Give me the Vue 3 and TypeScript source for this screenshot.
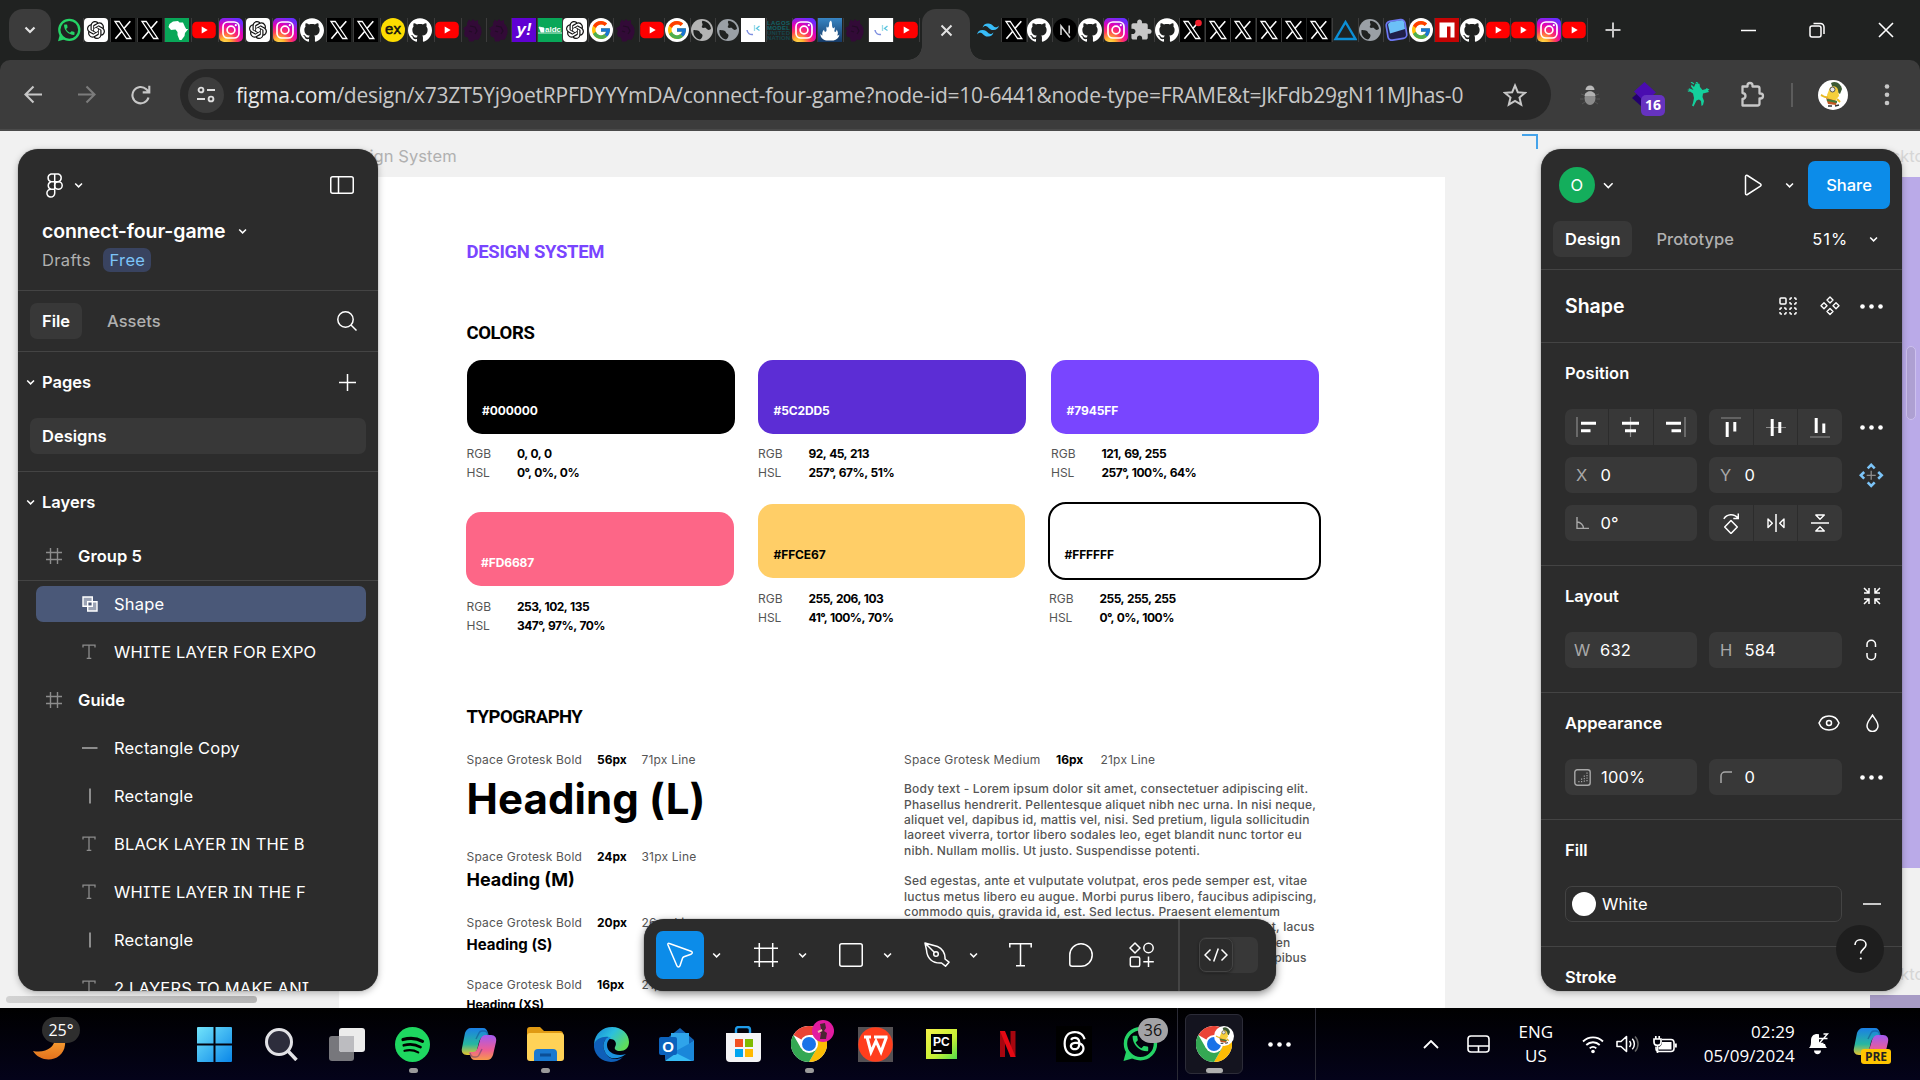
<script setup lang="ts">
import { h } from 'vue'
import type { FunctionalComponent } from 'vue'

const X_MARK =
  '<path d="M0 0h24v24H0z" fill="#000"/><path d="M4 3.5h4.2l11.6 17h-4.2z" fill="#000" stroke="#fff" stroke-width="1.3"/><path d="M19.3 3.2L12.9 10.6M10.8 13.2L4.4 20.8" stroke="#fff" stroke-width="1.6"/>'
const GLOBE = (c: string) =>
  `<circle cx="12" cy="12" r="11" fill="${c}"/><path d="M3.500 12c3 .2 6 .4 6.500 2.500.4 1.500 2.500 1 2.500 3 0 1.500-1 3-2.500 4C5 20.500 2.800 16 3.500 12zM12.500 2.800c4 .2 8 3.500 8.500 7.700-1.500 2.500-4 1.200-5-.5-1.500-.5-3 .5-4-.5s1-2 .5-3.500-1-2 0-3.200z" fill="#202221"/>`

/* Drawings are kept as SVG markup, each in its own pixel-sized view box. */
const art: Record<string, string> = {
  whatsapp:
    '<circle cx="12.300" cy="11.800" r="10" fill="none" stroke="#25d366" stroke-width="2.300"/><path d="M1 23.300l2-7.300 5 5.300z" fill="#25d366"/><path transform="translate(5.300 4.700) scale(.58)" d="M6.620 10.790c1.440 2.830 3.760 5.140 6.590 6.590l2.200-2.200c.27-.27.67-.36 1.020-.24 1.120.37 2.330.57 3.570.57.55 0 1 .45 1 1V20c0 .55-.45 1-1 1-9.390 0-17-7.610-17-17 0-.55.45-1 1-1h3.500c.55 0 1 .45 1 1 0 1.250.2 2.450.57 3.570.11.35.03.74-.25 1.020z" fill="#25d366"/>',
  gpt:
    '<rect width="24" height="24" rx="4" fill="#fff"/><path transform="translate(3 3) scale(.75)" fill="#111" d="M22.2819 9.8211a5.9847 5.9847 0 0 0-.5157-4.9108 6.0462 6.0462 0 0 0-6.5098-2.9A6.0651 6.0651 0 0 0 4.9807 4.1818a5.9847 5.9847 0 0 0-3.9977 2.9 6.0462 6.0462 0 0 0 .7427 7.0966 5.98 5.98 0 0 0 .511 4.9107 6.051 6.051 0 0 0 6.5146 2.9001A5.9847 5.9847 0 0 0 13.2599 24a6.0557 6.0557 0 0 0 5.7718-4.2058 5.9894 5.9894 0 0 0 3.9977-2.9001 6.0557 6.0557 0 0 0-.7475-7.0729zm-9.022 12.6081a4.4755 4.4755 0 0 1-2.8764-1.0408l.1419-.0804 4.7783-2.7582a.7948.7948 0 0 0 .3927-.6813v-6.7369l2.02 1.1686a.071.071 0 0 1 .038.052v5.5826a4.504 4.504 0 0 1-4.4945 4.4944zm-9.6607-4.1254a4.4708 4.4708 0 0 1-.5346-3.0137l.142.0852 4.783 2.7582a.7712.7712 0 0 0 .7806 0l5.8428-3.3685v2.3324a.0804.0804 0 0 1-.0332.0615L9.74 19.9502a4.4992 4.4992 0 0 1-6.1408-1.6464zM2.3408 7.8956a4.485 4.485 0 0 1 2.3655-1.9728V11.6a.7664.7664 0 0 0 .3879.6765l5.8144 3.3543-2.0201 1.1685a.0757.0757 0 0 1-.071 0l-4.8303-2.7865A4.504 4.504 0 0 1 2.3408 7.872zm16.5963 3.8558L13.1038 8.364 15.1192 7.2a.0757.0757 0 0 1 .071 0l4.8303 2.7913a4.4944 4.4944 0 0 1-.6765 8.1042v-5.6772a.79.79 0 0 0-.407-.667zm2.0107-3.0231l-.142-.0852-4.7735-2.7818a.7759.7759 0 0 0-.7854 0L9.409 9.2297V6.8974a.0662.0662 0 0 1 .0284-.0615l4.8303-2.7866a4.4992 4.4992 0 0 1 6.6802 4.66zM8.3065 12.863l-2.02-1.1638a.0804.0804 0 0 1-.038-.0567V6.0742a4.4992 4.4992 0 0 1 7.3757-3.4537l-.142.0805L8.704 5.459a.7948.7948 0 0 0-.3927.6813zm1.0976-2.3654l2.602-1.4998 2.6069 1.4998v2.9994l-2.5974 1.4997-2.6067-1.4997Z"/>',
  x: X_MARK,
  xdot: X_MARK + '<circle cx="18.500" cy="5" r="3.300" fill="#f4212e"/>',
  africa:
    '<path d="M0 0h24v24H0z" fill="#08a758"/><path d="M4.500 6L8 3.500l5-.5 1.500 1.500L18 4.500l2 4.500 1.200 2h2L20 15l-.5 3-3 4h-2l-2-5v-3l-2-2.500-4.500.5L3.500 9z" fill="#fff"/>',
  youtube:
    '<rect x=".2" y="3.800" width="23.600" height="16.500" rx="4.500" fill="#f00"/><path d="M9.700 8.500v7l6-3.500z" fill="#fff"/>',
  instagram:
    '<defs><radialGradient id="ig" cx=".25" cy="1.050" r="1.100"><stop offset="0" stop-color="#fd5"/><stop offset=".2" stop-color="#ffb52e"/><stop offset=".45" stop-color="#ff3d5a"/><stop offset=".7" stop-color="#e400b5"/><stop offset="1" stop-color="#6a2cff"/></radialGradient></defs><rect width="24" height="24" rx="5" fill="url(#ig)"/><rect x="4" y="4" width="16" height="16" rx="4.800" fill="none" stroke="#fff" stroke-width="1.700"/><circle cx="12" cy="12" r="3.900" fill="none" stroke="#fff" stroke-width="1.700"/><circle cx="16.800" cy="7.200" r="1.100" fill="#fff"/>',
  github:
    '<path fill="#fff" d="M12 .297c-6.630 0-12 5.373-12 12 0 5.303 3.438 9.800 8.205 11.385.6.113.82-.258.82-.577 0-.285-.01-1.040-.015-2.040-3.338.724-4.042-1.610-4.042-1.610C4.422 18.070 3.633 17.700 3.633 17.700c-1.087-.744.084-.729.084-.729 1.205.084 1.838 1.236 1.838 1.236 1.070 1.835 2.809 1.305 3.495.998.108-.776.417-1.305.76-1.605-2.665-.3-5.466-1.332-5.466-5.930 0-1.310.465-2.380 1.235-3.220-.135-.303-.54-1.523.105-3.176 0 0 1.005-.322 3.300 1.230.96-.267 1.980-.399 3-.405 1.020.006 2.040.138 3 .405 2.280-1.552 3.285-1.230 3.285-1.230.645 1.653.24 2.873.12 3.176.765.84 1.230 1.910 1.230 3.220 0 4.610-2.805 5.625-5.475 5.920.42.36.81 1.096.81 2.220 0 1.606-.015 2.896-.015 3.286 0 .315.21.69.825.57C20.565 22.092 24 17.592 24 12.297c0-6.627-5.373-12-12-12"/>',
  ex:
    '<circle cx="12" cy="12" r="12" fill="#fddc00"/><text x="12" y="16.200" text-anchor="middle" font-family="Liberation Sans, sans-serif" font-size="15" fill="#111" stroke="#111" stroke-width=".5">ex</text>',
  lion:
    '<path d="M8 1.500l2 2 2-2.500 2 2.300 3-1.300v3.500c2.500 2 4 5 3.500 9-.3 2.500-1.500 3.500-1.500 5l-2 2.500-3-.5-2 2H8l-1-4-3-1-1-3 1-3-2-2 4-3V5z" fill="#320a37"/><path d="M9 8l5 1 2 4-2 3M8 13l3 1" fill="none" stroke="#220c26" stroke-width="1.200"/>',
  yahoo:
    '<path d="M0 0h24v24H0z" fill="#6001d2"/><text x="12" y="16.500" text-anchor="middle" font-family="Liberation Sans, sans-serif" font-weight="700" font-style="italic" font-size="17" fill="#fff">y!</text>',
  alde:
    '<path d="M0 0h24v24H0z" fill="#08a758"/><path d="M0 15h24M1 9l5 1v4H3z" stroke="#fff" fill="#fff" stroke-width=".8"/><text x="15" y="14" text-anchor="middle" font-family="Liberation Sans, sans-serif" font-weight="700" font-size="8" fill="#fff">aldc</text>',
  google:
    '<circle cx="12" cy="12" r="12" fill="#fff"/><g transform="translate(1.200 1.200) scale(.45)"><path fill="#FFC107" d="M43.611 20.083H42V20H24v8h11.303c-1.649 4.657-6.080 8-11.303 8-6.627 0-12-5.373-12-12s5.373-12 12-12c3.059 0 5.842 1.154 7.961 3.039l5.657-5.657C34.046 6.053 29.268 4 24 4 12.955 4 4 12.955 4 24s8.955 20 20 20 20-8.955 20-20c0-1.341-.138-2.650-.389-3.917z"/><path fill="#FF3D00" d="M6.306 14.691l6.571 4.819C14.655 15.108 18.961 12 24 12c3.059 0 5.842 1.154 7.961 3.039l5.657-5.657C34.046 6.053 29.268 4 24 4 16.318 4 9.656 8.337 6.306 14.691z"/><path fill="#4CAF50" d="M24 44c5.166 0 9.860-1.977 13.409-5.192l-6.190-5.238A11.910 11.910 0 0 1 24 36c-5.202 0-9.619-3.317-11.283-7.946l-6.522 5.025C9.505 39.556 16.227 44 24 44z"/><path fill="#1976D2" d="M43.611 20.083H42V20H24v8h11.303a12.040 12.040 0 0 1-4.087 5.571l6.190 5.238C36.971 39.205 44 34 44 24c0-1.341-.138-2.650-.389-3.917z"/></g>',
  globe: GLOBE('#b4b4b4'),
  globe2: GLOBE('#9aa0a6'),
  smile:
    '<path d="M0 0h24v24H0z" fill="#fff"/><path d="M6 12c.5 3.500 3 5 6 4.500" fill="none" stroke="#7d8fe0" stroke-width="1.500"/><path d="M13.500 7v6" stroke="#9adbe8" stroke-width="1.300"/><path d="M18.500 8l-3 2.500 3 2" fill="none" stroke="#5cc6df" stroke-width="1.300"/>',
  lagos:
    '<g font-family="Liberation Sans, sans-serif" font-weight="700" font-size="6" fill="#126367"><text x="0" y="6.500" textLength="23">LAGOS</text><text x="0" y="11.500" textLength="23">MODEL</text><text x="0" y="16.700" textLength="23" fill="#17454b">UNITED</text><text x="0" y="21.800" textLength="23" fill="#17454b">NATION</text></g>',
  fire:
    '<defs><linearGradient id="fr" x2="0" y2="1"><stop stop-color="#3785c4"/><stop offset="1" stop-color="#153a66"/></linearGradient></defs><path d="M0 0h24v24H0z" fill="url(#fr)"/><path d="M13 2.500c-3 2-1 4.500-2.500 6.500-.8 1-1.500.5-1.500-.5-1.500 1.500.5 3.500-1 5-1.500.7-2-.5-1.800-2C4 13.500 4 16 4.500 17.500 3.500 17.300 3 16.500 2.500 15.500c-.5 4 2.500 6.500 6 7h7c3-.5 5.500-3 6-6-.7.8-1.500 1.200-2.200 1 1.200-2.500.5-4.500-.8-6 0 1.500-.5 2.500-1.500 2.500-1.500-1 .5-3-.5-5-.3 1-1 1.500-1.700 1-1.500-2.500 0-5-1.800-7.500z" fill="#fff"/>',
  tailwind:
    '<path transform="translate(-1.200 -1.200) scale(1.100)" fill="#38bdf8" d="M12 6c-2.670 0-4.330 1.330-5 4 1-1.330 2.170-1.830 3.500-1.500.76.19 1.310.74 1.910 1.350.98 1 2.090 2.150 4.590 2.150 2.670 0 4.330-1.330 5-4-1 1.330-2.170 1.830-3.500 1.500-.76-.19-1.300-.74-1.910-1.350C15.610 7.150 14.500 6 12 6m-5 6c-2.670 0-4.330 1.330-5 4 1-1.330 2.170-1.830 3.500-1.500.76.19 1.300.74 1.910 1.350C8.390 16.850 9.500 18 12 18c2.670 0 4.330-1.330 5-4-1 1.330-2.170 1.830-3.500 1.500-.76-.19-1.300-.74-1.910-1.350C10.610 13.150 9.500 12 7 12z"/>',
  next:
    '<circle cx="12" cy="12" r="12" fill="#000"/><path d="M8 17V8l9 11.500M16.200 7.500v8" fill="none" stroke="#ddd" stroke-width="1.500"/>',
  puzzle:
    '<path transform="translate(.5 .5) scale(.96)" fill="#c7c7c7" d="M20.500 11H19V7c0-1.100-.9-2-2-2h-4V3.500C13 2.120 11.880 1 10.500 1S8 2.120 8 3.500V5H4c-1.100 0-1.990.9-1.990 2v3.800H3.500c1.490 0 2.700 1.210 2.700 2.700s-1.210 2.700-2.700 2.700H2V20c0 1.100.9 2 2 2h3.800v-1.500c0-1.490 1.210-2.700 2.700-2.700 1.490 0 2.700 1.210 2.700 2.700V22H17c1.100 0 2-.9 2-2v-4h1.500c1.380 0 2.500-1.120 2.500-2.500S21.880 11 20.500 11z"/>',
  triangle: '<path d="M12.500 4L22.500 21H2.500z" fill="none" stroke="#0c8fd6" stroke-width="2.400"/>',
  tablet:
    '<rect x="3" y="2.500" width="19" height="19" rx="4" transform="rotate(-9 12 12)" fill="#20204a" stroke="#6d78f2" stroke-width="1.700"/><path d="M4 6.500q.5-2 2.500-2.500l11-1.700q2 0 2.500 1.700l1 7-15 4.500z" fill="#6cc0f8"/>',
  npm: '<path d="M0 0h24v24H0z" fill="#c60404"/><path d="M4.500 4.500h15v15h-4V8.500h-3.500v11H4.500z" fill="#fff"/>',

  /* browser chrome */
  tabSearch: '<path d="M5.500 7.500l4.500 4.500 4.500-4.500" stroke="#e3e3e3" stroke-width="2.200"/>',
  close: '<path d="M1.500 1.500l10 10m0-10l-10 10" stroke="#e3e3e3" stroke-width="2"/>',
  newTab: '<path d="M8 .5v15M.5 8h15" stroke="#c7c7c7" stroke-width="2"/>',
  winMin: '<path d="M0 8.500h15" stroke="#fff" stroke-width="1.500"/>',
  winMax:
    '<rect x="1" y="4" width="11" height="11" rx="2" stroke="#fff" stroke-width="1.500"/><path d="M4.500 1.500h7a3.500 3.500 0 0 1 3.500 3.500v7" stroke="#fff" stroke-width="1.500"/>',
  winClose: '<path d="M1 1l14 14M15 1L1 15" stroke="#fff" stroke-width="1.600"/>',
  back: '<path d="M18 9.500H2M9.500 1.500l-8 8 8 8" stroke="#c7c7c7" stroke-width="2.100"/>',
  forward: '<path d="M0 9.500h16M8.500 1.500l8 8-8 8" stroke="#7c7c7c" stroke-width="2.100"/>',
  reload:
    '<path d="M17.500 12.500A8.200 8.200 0 1 1 15.300 4.200L18 7M18.300 .8V7.400H11.700" stroke="#c7c7c7" stroke-width="2.100"/>',
  tune: '<circle cx="4" cy="4" r="2.400" stroke="#dedede" stroke-width="1.900"/><circle cx="14" cy="13" r="2.400" stroke="#dedede" stroke-width="1.900"/><path d="M10 4h8M0 13h8" stroke="#dedede" stroke-width="2"/>',
  star: '<path d="M12 2.500l2.800 6.700 7.200.6-5.500 4.700 1.700 7.100-6.200-3.800-6.200 3.800 1.700-7.100L2 9.800l7.200-.6z" stroke="#c7c7c7" stroke-width="2"/>',
  bug: '<path d="M5.500 6a3.800 3.800 0 0 1 9 0z" fill="#b9b9b9"/><ellipse cx="10" cy="14" rx="5.500" ry="7" fill="#8b8b8b"/><path d="M4.500 12c0-6 11-6 11 0z" fill="#b0b0b0"/><path d="M1 10l3 1M0 15h3.500M2 20l3-2M19 10l-3 1M20 15h-3.500M18 20l-3-2" stroke="#555" stroke-width="1"/>',
  diamond: '<path d="M0 16l9-8 9 9-8 8z" fill="#23006e"/><path d="M2 9.500L12.500 0 24 10.500 12.500 20z" fill="#4a0cb0"/>',
  goblin:
    '<path d="M5.500 2.500L8 5l1.500-3.500 4 .3.500 3.200 2.500 3 3.500-1 .5-1 3 1.500-1.500 1 1 1.500-6 1.500-.5 3.500 1.500 4-1 4-1.500 1-.5-5-2-1.500-2.500 1-3 6-1.500-1L7 21l1-5-1-4.500L4 9.500 1.500 10 3 8.500 1 8l2.500-.8L2.500 6l5 2L5 4.500z" fill="#14d09c"/><path d="M5 0l3 2M10 0l2 1.500" stroke="#14d09c" stroke-width="1.200"/>',
  extension:
    '<path d="M8.500 5.500V4.500a2.500 2.500 0 0 1 5 0v1h5a2 2 0 0 1 2 2v5h1a2.500 2.500 0 0 1 0 5h-1v5a2 2 0 0 1-2 2H3.500v-6.500c4-.5 4-5.500 0-6V5.500z" stroke="#c7c7c7" stroke-width="2.300" stroke-linejoin="round"/>',
  avatar:
    '<circle cx="15" cy="15" r="15" fill="#fff"/><path d="M13 3c5-3 10 1 11 6l-2 5-7-5z" fill="#3d5a34"/><path d="M11 10c1-5 8-5 9 0l1 6-5 6-6-2-1-5z" fill="#f6cf3b"/><circle cx="14.500" cy="9.500" r="2.500" fill="#e8e8e8" stroke="#555"/><path d="M8 18l11 3-1 4-8-1z" fill="#c2571f"/><path d="M10 17c-3 1-5-1-7-2M19 19l3 3" stroke="#e8b923" stroke-width="2"/><path d="M10 26h4M17 26l4-1" stroke="#333" stroke-width="1.500"/><path d="M9 20l10 2" stroke="#3f7d3a" stroke-width="2"/>',
  kebab: '<g fill="#c7c7c7"><circle cx="3" cy="2.500" r="2.300"/><circle cx="3" cy="10.700" r="2.300"/><circle cx="3" cy="19" r="2.300"/></g>',

  /* editor */
  chev: '<path d="M1.200 1.500l3.400 3.400L8 1.500" stroke-width="1.500"/>',
  chevL: '<path d="M1 1.300l4.300 4.300 4.300-4.300" stroke-width="1.500"/>',
  figma:
    '<g stroke-width="1.500"><path d="M8.700 1H5a4 4 0 0 0 0 7.700h3.700zM8.700 1h3.600a4 4 0 0 1 0 7.700H8.700zM8.700 8.700H5a4 4 0 0 0 0 7.600h3.700zM8.700 16.300H5a3.900 3.900 0 1 0 3.700 3.900z"/><circle cx="12.400" cy="12.500" r="3.800"/></g>',
  sidebar: '<rect x=".75" y=".75" width="22.500" height="16.500" rx="2" stroke-width="1.500"/><path d="M8.500 1v16" stroke-width="1.500"/>',
  search: '<circle cx="8.500" cy="8.500" r="7.700" stroke-width="1.500"/><path d="M14 14l5.500 5.500" stroke-width="1.500"/>',
  plus: '<path d="M8.500 0v17M0 8.500h17" stroke-width="1.500"/>',
  hash: '<path d="M4.500 0v16M11.500 0v16M0 4.500h16M0 11.500h16" stroke-width="1.400"/>',
  union:
    '<path d="M1 1h9.300v4.700h4.700V15H5.700v-4.700H1z" fill="#fff" fill-opacity=".45" stroke-width="1.400"/><path d="M5.700 10.300V5.700h4.600v4.600z" fill="#4a5878" stroke-width="1.400"/>',
  tee: '<path d="M1 3.500V1.200h12V3.500M7 1.200v13M4.700 14.300h4.600" stroke-width="1.300"/>',
  bar: '<path d="M0 8h15.500" stroke-width="2"/>',
  pole: '<path d="M8 .5v15" stroke-width="2"/>',
  play: '<path d="M1.500 2.500v17c0 1.200 1 1.500 1.900 1l13-8.300c.9-.6.9-1.700 0-2.300l-13-8.400c-.9-.5-1.900-.2-1.900 1z" stroke-width="1.500"/>',
  dots: '<g fill="currentColor" stroke="none"><circle cx="2.500" cy="2.500" r="2.300"/><circle cx="11.500" cy="2.500" r="2.300"/><circle cx="20.500" cy="2.500" r="2.300"/></g>',
  select:
    '<rect x="1" y="1" width="6" height="6" rx="1" stroke-width="1.500"/><g stroke-width="1.500"><path d="M11 3V2q0-1 1-1h1M15 1h1q1 0 1 1v1M17 5v1q0 1-1 1h-1M13 7h-1q-1 0-1-1V5"/><path d="M1 13v-1q0-1 1-1h1M5 11h1q1 0 1 1v1M7 15v1q0 1-1 1H5M3 17H2q-1 0-1-1v-1"/><path d="M11 13v-1q0-1 1-1h1M15 11h1q1 0 1 1v1M17 15v1q0 1-1 1h-1M13 17h-1q-1 0-1-1v-1"/></g>',
  component:
    '<g stroke-width="1.400" stroke-linejoin="round"><path d="M10 1l3 3-3 3-3-3zM10 12.500l3 3-3 3-3-3zM4 6.700l3 3-3 3-3-3zM16 6.700l3 3-3 3-3-3z"/></g>',
  alL: '<path d="M1 0v20" stroke="#8c8c8c"/><path d="M5 6.200h15M5 13.800h9.500" stroke-width="3"/>',
  alCx: '<path d="M9.500 0v20" stroke="#8c8c8c"/><path d="M1 6.200h17M4 13.800h11" stroke-width="3"/>',
  alR: '<path d="M20 0v20" stroke="#8c8c8c"/><path d="M1 6.200h15M6.500 13.800H16" stroke-width="3"/>',
  alT: '<path d="M0 1h20" stroke="#8c8c8c"/><path d="M6.200 5v15M13.800 5v9.500" stroke-width="3"/>',
  alCy: '<path d="M0 9.500h20" stroke="#8c8c8c"/><path d="M6.200 1v17M13.800 4v11" stroke-width="3"/>',
  alB: '<path d="M0 20h20" stroke="#8c8c8c"/><path d="M6.200 1v15M13.800 6.500V16" stroke-width="3"/>',
  move: '<g stroke="#7cc4f8" stroke-width="2.600"><path d="M8.700 5.300l3.500-3.500 3.500 3.500M8.700 19.300l3.500 3.500 3.500-3.500M5.200 9L1.800 12.300l3.400 3.400M19.200 9l3.500 3.300-3.500 3.400"/></g><path d="M12.200 7.800v9M7.700 12.300h9" stroke="#8c8c8c" stroke-width="1.300"/>',
  angle: '<path d="M1 0v11.500h12M1 5a6.500 6.500 0 0 1 6.500 6.500" stroke-width="1.400"/>',
  rotate: '<path d="M8 7.500l6.300 6.500L8 20.500 1.700 14z" stroke-width="1.500" stroke-linejoin="round"/><path d="M.8 5.800C4 1 11 .2 15 5.300M15.300 .5v5h-5" stroke-width="1.500"/>',
  flipH: '<path d="M9 0v18" stroke-width="1.500"/><path d="M1 5v8.500L5.300 9.200zM17 5v8.500l-4.300-4.300z" stroke-width="1.400" stroke-linejoin="round"/>',
  flipV: '<path d="M0 9h18" stroke-width="1.500"/><path d="M4.800 1h8.500L9 5.300zM4.800 17h8.500L9 12.700z" stroke-width="1.400" stroke-linejoin="round"/>',
  shrink:
    '<path d="M1 1l4.500 4.500M6 1v5H1M17 1l-4.500 4.500M12 1v5h5M1 17l4.500-4.500M6 17v-5H1M17 17l-4.500-4.500M12 17v-5h5" stroke-width="1.500"/>',
  link: '<path d="M1 8V5.500a4.200 4.200 0 0 1 8.500 0V8M1 14v2.500a4.200 4.200 0 0 0 8.500 0V14" stroke-width="1.500"/>',
  eye: '<path d="M1 8c1.500-4 5-7 10-7s8.500 3 10 7c-1.500 4-5 7-10 7S2.500 12 1 8z" stroke-width="1.500"/><circle cx="11" cy="8" r="2.500" stroke-width="1.500"/>',
  drop: '<path d="M6.500 1.200C8 4 12 7.500 12 12a5.500 5.500 0 0 1-11 0C1 7.500 5 4 6.500 1.200z" stroke-width="1.500"/>',
  opacity:
    '<rect x=".8" y=".8" width="15.400" height="15.400" rx="2.500" stroke="#a8a8a8" stroke-width="1.400"/><path d="M13 3.500v10M10.300 6.500v7M7.600 9.500v4M4.900 12v1.500" stroke="#a8a8a8" stroke-width="1.200" stroke-dasharray="1.200 1.300"/>',
  corner: '<path d="M1 12V5a4 4 0 0 1 4-4h7" stroke="#a8a8a8" stroke-width="1.500"/>',
  minus: '<path d="M0 1h18" stroke-width="1.500"/>',
  pointer:
    '<path d="M2.400 1.500L24 9.300c1.700.6 1.700 2.300 0 2.900l-7 2.500c-.7.300-1.200.7-1.500 1.500l-2.500 7.500c-.6 1.700-2.400 1.700-3.100 0L1 3C.6 1.800 1.300 1 2.400 1.500z" stroke-width="1.500"/>',
  frame: '<path d="M5.300 0v24M18.700 0v24M0 5.300h24M0 18.700h24" stroke-width="1.500"/>',
  square: '<rect x=".75" y=".75" width="22.500" height="22.500" rx="2" stroke-width="1.500"/>',
  pen: '<path d="M1 1l12.500 3.500c4.500 1.500 8 7 7.500 12.500l4 3.200-3.500 4-4-3.200C8 21.500 3 16 2.500 8zM1 1l9.500 9.500" stroke-width="1.500" stroke-linejoin="round"/><circle cx="12" cy="12" r="2.300" stroke-width="1.500"/>',
  text: '<path d="M.8 4.500V.8h21.400v3.700M11.500 .8v22M7 22.800h9" stroke-width="1.500"/>',
  comment: '<path d="M12 .8a11.200 11.200 0 1 1 0 22.400H3.300C1.500 23.200.8 22.500.8 20.700V12A11.200 11.200 0 0 1 12 .8z" stroke-width="1.500"/>',
  widgets:
    '<g stroke-width="1.500" stroke-linejoin="round"><path d="M6 1l5 5-5 5-5-5z"/><circle cx="19.500" cy="6" r="4.700"/><rect x="1.300" y="15" width="9.400" height="9.400" rx="1.500"/><path d="M19.500 14.500v10.500M14.300 19.700h10.500"/></g>',
  code: '<path d="M6.500 1.500L1 7l5.500 5.500M17.500 1.500L23 7l-5.500 5.500M14.300 .5L9.700 13.500" stroke-width="1.500"/>',
  help: '<path d="M1 6c0-3 2.200-5.200 5.400-5.200S12 3 12 5.700c0 4-5.300 4.300-5.300 8.800" stroke-width="1.600"/><circle cx="6.800" cy="19.500" r="1.100" fill="currentColor" stroke="none"/>',

  /* taskbar */
  weather:
    '<defs><linearGradient id="mn" x2="0" y2="1"><stop stop-color="#ffb13b"/><stop offset="1" stop-color="#e2711c"/></linearGradient></defs><path d="M22 1c6 12-4 22-20 19 8 13 30 11 32-6C35 7 30 2 22 1z" fill="url(#mn)"/>',
  windows:
    '<defs><linearGradient id="wn" x2="1" y2="1"><stop stop-color="#72e4fb"/><stop offset="1" stop-color="#0a86e8"/></linearGradient></defs><path d="M0 1q0-1 1-1h15.500v16.500H0zM18.500 0H34q1 0 1 1v15.500H18.500zM0 18.500h16.500V35H1q-1 0-1-1zM18.500 18.500H35V34q0 1-1 1H18.500z" fill="url(#wn)"/>',
  tsearch: '<circle cx="15" cy="15" r="12.500" fill="#2d2d3c" stroke="#e2e2e6" stroke-width="3"/><path d="M24 24l8.500 9" stroke="#e2e2e6" stroke-width="3.500"/>',
  taskview: '<rect x="0" y="9" width="25" height="25" rx="3" fill="#77777c"/><rect x="10" y="1" width="26" height="24" rx="3" fill="#ececec"/><path d="M10 9h15v16H13q-3 0-3-3z" fill="#bcbcc0"/>',
  spotify:
    '<circle cx="17.500" cy="17.500" r="17.500" fill="#1ed760"/><g fill="none" stroke="#000" stroke-linecap="round"><path d="M8 12.500c7-2 14-1.300 19.500 1.800" stroke-width="3.200"/><path d="M8.800 18.300c6-1.700 11.800-1 16.700 1.800" stroke-width="2.700"/><path d="M9.500 23.800c5-1.300 9.500-.8 13.700 1.600" stroke-width="2.200"/></g>',
  copilot:
    '<defs><linearGradient id="cp1" x2="0" y2="1"><stop stop-color="#1b7fe6"/><stop offset=".6" stop-color="#27b7a0"/><stop offset="1" stop-color="#e8c52c"/></linearGradient><linearGradient id="cp2" x2="0" y2="1"><stop stop-color="#a25af2"/><stop offset=".6" stop-color="#ee5d94"/><stop offset="1" stop-color="#f79a4a"/></linearGradient></defs><path d="M10 1h12c3 0 4 2 5 5l1 4h-5c-3 0-4 2-5 5l-2 8c-1 3-3 5-6 5H6c-4 0-6-3-5-7L4 6c1-3 3-5 6-5z" fill="url(#cp1)"/><path d="M26 33H14c-3 0-4-2-5-5l-1-3h4c3 0 4-2 5-5l2-7c1-3 3-5 6-5h5c4 0 6 3 5 7l-3 13c-1 3-3 5-6 5z" fill="url(#cp2)"/><path d="M15 12l3-6q1-2 3-2h2q3 0 4 4M21 22l-3 6q-1 2-3 2h-2q-3 0-4-4" fill="none" stroke="#0b2a6b" stroke-opacity=".35" stroke-width="1.500"/>',
  explorer:
    '<path d="M0 3q0-3 3-3h10l4 4h16q3 0 3 3v6H0z" fill="#e09a13"/><rect y="6" width="37" height="28" rx="3" fill="#ffd257"/><path d="M7 34V26q0-4 4-4h15q4 0 4 4v8z" fill="#1979d0"/><path d="M13 28h11" stroke="#0b4f96" stroke-width="3"/>',
  edge:
    '<defs><linearGradient id="ed" x2="1" y2=".6"><stop stop-color="#1583d8"/><stop offset=".5" stop-color="#2cc0dd"/><stop offset="1" stop-color="#5fdb5b"/></linearGradient></defs><path d="M0 17C1 6 9 0 18 0c10 0 17 7 17 15 0 6-4 9-9 9-4 0-6-2-5-4 2-3 1-8-5-8-8 0-13 4-16 5z" fill="url(#ed)"/><path d="M0 17C2 12 8 9 15 10c-6 3-7 9-4 15 3 7 10 9 18 5-4 4-8 5-12 5C7 35-1 27 0 17z" fill="#0f5fb8"/><path d="M15 10c-6 3-7 9-4 15 3 7 12 9 21 2-9 3-19-1-19-9 0-3 1-5 4-7z" fill="#1b92e0"/>',
  outlook:
    '<path d="M6 14L21 2l14 12v19q0 2-2 2H8q-2 0-2-2z" fill="#1263b5"/><path d="M12 7h18v18H12z" fill="#2fa4ea"/><path d="M6 35l29-20v18q0 2-2 2z" fill="#38bdf5"/><path d="M35 15v18q0 2-2 2L15 26z" fill="#1a87da"/><rect y="11" width="18" height="18" rx="2" fill="#0b62bd"/><text x="9" y="25.500" text-anchor="middle" font-family="Liberation Sans, sans-serif" font-weight="700" font-size="15" fill="#fff">O</text>',
  store:
    '<path d="M10 8V4q0-3 3-3h8q3 0 3 3v4" fill="none" stroke="#1f9be8" stroke-width="2.400"/><path d="M0 7h35v25q0 4-4 4H4q-4 0-4-4z" fill="#f4f4f6"/><path d="M9 13h8v8H9z" fill="#f25022"/><path d="M19 13h8v8h-8z" fill="#7fba00"/><path d="M9 23h8v8H9z" fill="#00a4ef"/><path d="M19 23h8v8h-8z" fill="#ffb900"/>',
  chrome:
    '<circle cx="18" cy="18" r="18" fill="#fff"/><path d="M18 18L2.400 9A18 18 0 0 1 33.600 9H18z" fill="#ea4335"/><path d="M18 18L33.600 9A18 18 0 0 1 18 36l7.800-13.500z" fill="#fbbc04"/><path d="M18 18l7.800 4.500L18 36A18 18 0 0 1 2.400 9l7.800 13.500z" fill="#34a853"/><circle cx="18" cy="18" r="9" fill="#fff"/><circle cx="18" cy="18" r="7" fill="#1a73e8"/>',
  badgePink: '<circle cx="11" cy="11" r="11" fill="#e11ba0"/><path d="M8 4l5-1 1 5-2 3 3 2-1 6H8l1-6-3-2 3-2z" fill="#4c2433"/><path d="M6 12l4-2" stroke="#f2b8b0" stroke-width="2"/>',
  wps: '<path d="M0 0h35v35H0z" fill="#555154"/><circle cx="17.500" cy="17.500" r="17.300" fill="#ff3e1d"/><path d="M6 10h7M9 10l4 15 5-11 5 11 5.500-15M16 10h13.500" fill="none" stroke="#fff" stroke-width="3"/>',
  pycharm:
    '<defs><linearGradient id="pc" x2="1" y2="1"><stop stop-color="#f5f04a"/><stop offset=".6" stop-color="#c6f135"/><stop offset="1" stop-color="#4fdc4a"/></linearGradient></defs><path d="M0 0h31v30H0z" fill="url(#pc)"/><path d="M5 5h21v20H5z" fill="#000"/><text x="7" y="16.500" font-family="Liberation Sans, sans-serif" font-weight="700" font-size="12" fill="#fff">PC</text><path d="M7.500 22h8" stroke="#fff" stroke-width="1.800"/>',
  netflix: '<path d="M0 0h5v26H0zM10.500 0h5v26h-5z" fill="#a5060f"/><path d="M0 0h5l10.500 26h-5z" fill="#e50914"/>',
  threads:
    '<path d="M0 0h36v36H0z" fill="#000"/><path transform="translate(6 5) scale(1.050)" fill="#fff" d="M12.186 24h-.007c-3.581-.024-6.334-1.205-8.184-3.509C2.350 18.440 1.500 15.586 1.472 12.010v-.017c.03-3.579.879-6.430 2.525-8.482C5.845 1.205 8.600.024 12.180 0h.014c2.746.02 5.043.725 6.826 2.098 1.677 1.290 2.858 3.130 3.509 5.467l-2.040.569c-1.104-3.960-3.898-5.984-8.304-6.015-2.910.022-5.110.936-6.540 2.717C4.307 6.504 3.616 8.914 3.589 12c.027 3.086.718 5.496 2.057 7.164 1.430 1.783 3.631 2.698 6.540 2.717 2.623-.02 4.358-.631 5.800-2.045 1.647-1.613 1.618-3.593 1.090-4.798-.31-.71-.873-1.300-1.634-1.750-.192 1.352-.622 2.446-1.284 3.272-.886 1.102-2.140 1.704-3.730 1.790-1.202.065-2.361-.218-3.259-.801-1.063-.689-1.685-1.740-1.752-2.964-.065-1.190.408-2.285 1.330-3.082.88-.76 2.119-1.207 3.583-1.291a13.853 13.853 0 0 1 3.020.142c-.126-.742-.375-1.332-.75-1.757-.513-.586-1.308-.883-2.359-.89h-.029c-.844 0-1.992.232-2.721 1.320L7.734 7.847c.98-1.454 2.568-2.256 4.478-2.256h.044c3.194.02 5.097 1.975 5.287 5.388.108.046.216.094.321.142 1.490.7 2.580 1.761 3.154 3.070.797 1.820.871 4.790-1.548 7.158-1.850 1.810-4.094 2.628-7.277 2.650Zm1.003-11.690c-.242 0-.487.007-.739.021-1.836.103-2.980.946-2.916 2.143.067 1.256 1.452 1.839 2.784 1.767 1.224-.065 2.818-.543 3.086-3.710a10.500 10.500 0 0 0-2.215-.221z"/>',
  upArrow: '<path d="M1 8l7-7 7 7" stroke="#fff" stroke-width="1.800"/>',
  touchpad: '<rect x="1" y="1" width="21" height="16" rx="3" stroke="#fff" stroke-width="1.600"/><path d="M1 11h21M11.500 11v6" stroke="#fff" stroke-width="1.600"/>',
  wifi: '<g stroke="#fff" stroke-width="1.800"><path d="M1 6.500c5.500-5.500 14.500-5.500 20 0M4.300 10c3.700-3.700 9.700-3.700 13.400 0M7.700 13.300c1.900-1.800 4.700-1.800 6.600 0"/></g><circle cx="11" cy="16.500" r="1.800" fill="#fff"/>',
  speaker: '<path d="M1 6.500h4L10.500 1.500v15L5 11.500H1z" stroke="#fff" stroke-width="1.600" stroke-linejoin="round"/><path d="M13.500 6c1.500 1.800 1.500 4.200 0 6M16.300 3.700c2.800 3 2.800 7.600 0 10.600" stroke="#fff" stroke-width="1.500"/><path d="M19 1.500c4 4.300 4 10.700 0 15" stroke="#666" stroke-width="1.500"/>',
  battery: '<rect x="3" y="4.500" width="18" height="12" rx="3" stroke="#fff" stroke-width="1.600"/><path d="M5.500 7h13v7.500h-13z" fill="#fff"/><path d="M22.800 8.500v4" stroke="#fff" stroke-width="2"/><path d="M0 3h9v4c0 4-2.500 5-4.500 5S0 11 0 7z" fill="#02020c"/><path d="M1 4h7v3c0 4.500-7 4.500-7 0zM2.800 1v3M6.200 1v3M4.500 10.500V18" stroke="#fff" stroke-width="1.700"/>',
  bell: '<path d="M2 15c2-2 2-4 2-7.500C4 3 7 1 10 1l2 .3V11h6c.3 1.500 1 3 2 4zM7 17.500h7c0 5-7 5-7 0z" fill="#fff"/><path d="M12 5.500h4.500L12 10.500h4.500M16.500 1h4l-4 4.500h4" stroke="#fff" stroke-width="1.400"/>',
}

const Icon: FunctionalComponent<{ name: string; w: number; h: number }> = (p) =>
  h('svg', {
    width: p.w,
    height: p.h,
    viewBox: `0 0 ${p.w} ${p.h}`,
    fill: 'none',
    stroke: 'none',
    innerHTML: art[p.name],
  })
Icon.props = ['name', 'w', 'h']

const tabsWide =
  'whatsapp gpt x x africa youtube instagram gpt instagram github x x ex github youtube'.split(' ')
const tabsMid =
  'lion lion yahoo alde gpt google lion youtube google globe globe2 smile lagos instagram fire lion smile youtube'.split(' ')
const tabsEnd =
  'tailwind x github next github instagram puzzle github xdot x x x x x triangle globe2 tablet google npm github youtube youtube instagram youtube'.split(' ')

interface Layer {
  label: string
  icon: string
  top?: boolean
  active?: boolean
}
const layers: Layer[] = [
  { label: 'Group 5', icon: 'hash', top: true },
  { label: 'Shape', icon: 'union', active: true },
  { label: 'WHITE LAYER FOR EXPO', icon: 'tee' },
  { label: 'Guide', icon: 'hash', top: true },
  { label: 'Rectangle Copy', icon: 'bar' },
  { label: 'Rectangle', icon: 'pole' },
  { label: 'BLACK LAYER IN THE B', icon: 'tee' },
  { label: 'WHITE LAYER IN THE F', icon: 'tee' },
  { label: 'Rectangle', icon: 'pole' },
  { label: '2 LAYERS TO MAKE ANI', icon: 'tee' },
]

const swatches = [
  { key: 'black', hex: '#000000', rgb: '0, 0, 0', hsl: '0°, 0%, 0%' },
  { key: 'deep', hex: '#5C2DD5', rgb: '92, 45, 213', hsl: '257°, 67%, 51%' },
  { key: 'violet', hex: '#7945FF', rgb: '121, 69, 255', hsl: '257°, 100%, 64%' },
  { key: 'pink', hex: '#FD6687', rgb: '253, 102, 135', hsl: '347°, 97%, 70%' },
  { key: 'yellow', hex: '#FFCE67', rgb: '255, 206, 103', hsl: '41°, 100%, 70%' },
  { key: 'white', hex: '#FFFFFF', rgb: '255, 255, 255', hsl: '0°, 0%, 100%' },
]

const headings = [
  { size: 'l', px: '56px', line: '71px Line', text: 'Heading (L)' },
  { size: 'm', px: '24px', line: '31px Line', text: 'Heading (M)' },
  { size: 's', px: '20px', line: '26px Line', text: 'Heading (S)' },
  { size: 'xs', px: '16px', line: '21px Line', text: 'Heading (XS)' },
]

const body = [
  'Body text - Lorem ipsum dolor sit amet, consectetuer adipiscing elit.',
  'Phasellus hendrerit. Pellentesque aliquet nibh nec urna. In nisi neque,',
  'aliquet vel, dapibus id, mattis vel, nisi. Sed pretium, ligula sollicitudin',
  'laoreet viverra, tortor libero sodales leo, eget blandit nunc tortor eu',
  'nibh. Nullam mollis. Ut justo. Suspendisse potenti.',
  '',
  'Sed egestas, ante et vulputate volutpat, eros pede semper est, vitae',
  'luctus metus libero eu augue. Morbi purus libero, faucibus adipiscing,',
  'commodo quis, gravida id, est. Sed lectus. Praesent elementum',
  'hendrerit tortor. Sed semper lorem at felis. Vestibulum volutpat, lacus',
  'a ultrices sagittis, mi neque euismod dui, eu pulvinar nunc sapien',
  'ornare nisl. Phasellus pede arcu, dapibus eu, fermentum et, dapibus',
]

const apps = [
  { name: 'windows', w: 35, h: 35 },
  { name: 'tsearch', w: 34, h: 34 },
  { name: 'taskview', w: 36, h: 34 },
  { name: 'spotify', w: 35, h: 35, open: true },
  { name: 'copilot', w: 36, h: 34 },
  { name: 'explorer', w: 37, h: 34, open: true },
  { name: 'edge', w: 35, h: 35 },
  { name: 'outlook', w: 36, h: 36 },
  { name: 'store', w: 35, h: 36 },
  { name: 'chrome', w: 36, h: 36, open: true, pink: true },
  { name: 'wps', w: 35, h: 35 },
  { name: 'pycharm', w: 31, h: 30 },
  { name: 'netflix', w: 16, h: 26 },
  { name: 'threads', w: 36, h: 36 },
  { name: 'whatsapp', w: 24, h: 24, count: '36' },
]
</script>

<template>
  <div class="screen">
    <header class="browser">
      <div class="tabstrip">
        <button class="tab-search"><Icon name="tabSearch" :w="20" :h="20" /></button>
        <div class="tabs wide">
          <span v-for="(t, i) in tabsWide" :key="i" class="tab"><Icon :name="t" :w="24" :h="24" /></span>
        </div>
        <div class="tabs">
          <span v-for="(t, i) in tabsMid" :key="i" class="tab"><Icon :name="t" :w="24" :h="24" /></span>
        </div>
        <div class="tab-active"><Icon name="close" :w="13" :h="13" /></div>
        <div class="tabs">
          <span v-for="(t, i) in tabsEnd" :key="i" class="tab"><Icon :name="t" :w="24" :h="24" /></span>
        </div>
        <Icon class="new-tab" name="newTab" :w="16" :h="16" />
        <div class="win-controls">
          <span><Icon name="winMin" :w="15" :h="16" /></span>
          <span><Icon name="winMax" :w="16" :h="16" /></span>
          <span><Icon name="winClose" :w="16" :h="16" /></span>
        </div>
      </div>
      <div class="toolbar">
        <span class="nav"><Icon name="back" :w="19" :h="19" /></span>
        <span class="nav"><Icon name="forward" :w="18" :h="19" /></span>
        <span class="nav"><Icon name="reload" :w="20" :h="20" /></span>
        <div class="omnibox">
          <span class="site-info"><Icon name="tune" :w="18" :h="17" /></span>
          <span class="url"><b>figma.com</b>/design/x73ZT5Yj9oetRPFDYYYmDA/connect-four-game?node-id=10-6441&amp;node-type=FRAME&amp;t=JkFdb29gN11MJhas-0</span>
          <Icon class="star" name="star" :w="24" :h="24" />
        </div>
        <div class="exts">
          <span class="ext"><Icon name="bug" :w="20" :h="21" /></span>
          <span class="ext"><Icon name="diamond" :w="24" :h="26" /><i class="ext-count">16</i></span>
          <span class="ext"><Icon name="goblin" :w="24" :h="26" /></span>
          <span class="ext"><Icon name="extension" :w="26" :h="27" /></span>
          <i class="ext-rule"></i>
          <span class="profile"><Icon name="avatar" :w="30" :h="30" /></span>
          <Icon name="kebab" :w="6" :h="22" />
        </div>
      </div>
    </header>

    <main class="canvas">
      <span class="frame-label">Design System</span>
      <section class="frame">
        <h1>DESIGN SYSTEM</h1>
        <h2>COLORS</h2>
        <div class="swatches">
          <article v-for="s in swatches" :key="s.key" class="swatch" :class="s.key">
            <div class="chip"><span>{{ s.hex }}</span></div>
            <p><span>RGB</span><b>{{ s.rgb }}</b></p>
            <p><span>HSL</span><b>{{ s.hsl }}</b></p>
          </article>
        </div>
        <h2 class="typo">TYPOGRAPHY</h2>
        <div class="columns">
          <div class="col">
            <template v-for="t in headings" :key="t.size">
              <p class="caption" :class="t.size"><span>Space Grotesk Bold</span><b>{{ t.px }}</b><i>{{ t.line }}</i></p>
              <p class="sample" :class="t.size">{{ t.text }}</p>
            </template>
          </div>
          <div class="col">
            <p class="caption medium l"><span>Space Grotesk Medium</span><b>16px</b><i>21px Line</i></p>
            <div class="body">
              <p v-for="(line, i) in body" :key="i">{{ line }}</p>
            </div>
          </div>
        </div>
      </section>

      <i class="selection-corner"></i>
      <span class="side-label first">Desktop</span>
      <div class="side-frame first"></div>
      <i class="vscroll"></i>
      <span class="side-label second">Desktop</span>
      <div class="side-frame second"></div>
      <i class="hscroll"></i>

      <aside class="panel left">
        <section class="file">
          <div class="file-top">
            <Icon name="figma" :w="17" :h="25" />
            <Icon class="c1" name="chev" :w="9" :h="6" />
            <Icon class="toggle" name="sidebar" :w="24" :h="18" />
          </div>
          <div class="file-name"><b>connect-four-game</b><Icon name="chev" :w="9" :h="6" /></div>
          <div class="file-meta"><span>Drafts</span><em>Free</em></div>
        </section>
        <section class="tabs-row">
          <span class="pill">File</span><span class="muted">Assets</span>
          <Icon class="end" name="search" :w="20" :h="20" />
        </section>
        <section class="pages">
          <div class="head"><Icon name="chev" :w="9" :h="6" /><b>Pages</b><Icon class="end" name="plus" :w="17" :h="17" /></div>
          <div class="page">Designs</div>
        </section>
        <section class="layers">
          <div class="head"><Icon name="chev" :w="9" :h="6" /><b>Layers</b></div>
          <div v-for="(l, i) in layers" :key="i" class="row" :class="{ top: l.top, active: l.active }">
            <div class="row-box"><Icon :name="l.icon" :w="16" :h="16" /><span>{{ l.label }}</span></div>
          </div>
        </section>
      </aside>

      <aside class="panel right">
        <div class="r-top">
          <span class="user">O</span><Icon class="c-user" name="chevL" :w="11" :h="7" />
          <Icon class="r-play" name="play" :w="19" :h="22" /><Icon class="c-play" name="chev" :w="9" :h="6" />
          <span class="share">Share</span>
        </div>
        <div class="r-tabs">
          <span class="pill">Design</span><span class="muted">Prototype</span>
          <span class="zoom">51%</span><Icon name="chev" :w="9" :h="6" />
        </div>
        <div class="r-title">
          <b>Shape</b>
          <Icon name="select" :w="18" :h="18" /><Icon name="component" :w="20" :h="20" /><Icon name="dots" :w="23" :h="5" />
        </div>
        <section class="prop">
          <h3>Position</h3>
          <div class="prow">
            <div class="seg"><span><Icon name="alL" :w="21" :h="20" /></span><span><Icon name="alCx" :w="19" :h="20" /></span><span><Icon name="alR" :w="21" :h="20" /></span></div>
            <div class="seg"><span><Icon name="alT" :w="20" :h="21" /></span><span><Icon name="alCy" :w="20" :h="19" /></span><span><Icon name="alB" :w="20" :h="21" /></span></div>
            <Icon name="dots" :w="23" :h="5" />
          </div>
          <div class="prow">
            <div class="field"><i>X</i>0</div>
            <div class="field"><i>Y</i>0</div>
            <Icon name="move" :w="25" :h="25" />
          </div>
          <div class="prow">
            <div class="field"><i><Icon name="angle" :w="13" :h="12" /></i>0°</div>
            <div class="seg"><span><Icon name="rotate" :w="16" :h="21" /></span><span><Icon name="flipH" :w="18" :h="18" /></span><span><Icon name="flipV" :w="18" :h="18" /></span></div>
          </div>
        </section>
        <section class="prop">
          <h3>Layout<Icon name="shrink" :w="18" :h="18" /></h3>
          <div class="prow">
            <div class="field tight"><i>W</i>632</div>
            <div class="field"><i>H</i>584</div>
            <Icon name="link" :w="11" :h="22" />
          </div>
        </section>
        <section class="prop">
          <h3>Appearance<Icon class="eye" name="eye" :w="22" :h="16" /><Icon class="drop" name="drop" :w="13" :h="18" /></h3>
          <div class="prow">
            <div class="field wide"><i><Icon name="opacity" :w="17" :h="17" /></i>100%</div>
            <div class="field"><i><Icon name="corner" :w="13" :h="13" /></i>0</div>
            <Icon name="dots" :w="23" :h="5" />
          </div>
        </section>
        <section class="prop">
          <h3>Fill</h3>
          <div class="prow">
            <div class="fill"><i></i>White</div>
            <Icon name="minus" :w="18" :h="2" />
          </div>
        </section>
        <section class="prop"><h3>Stroke</h3></section>
        <span class="help"><Icon name="help" :w="13" :h="21" /></span>
      </aside>

      <nav class="tools">
        <span class="tool on"><Icon name="pointer" :w="26" :h="26" /></span><Icon class="tc" name="chev" :w="9" :h="6" />
        <span class="tool"><Icon name="frame" :w="24" :h="24" /></span><Icon class="tc" name="chev" :w="9" :h="6" />
        <span class="tool"><Icon name="square" :w="24" :h="24" /></span><Icon class="tc" name="chev" :w="9" :h="6" />
        <span class="tool"><Icon name="pen" :w="26" :h="26" /></span><Icon class="tc" name="chev" :w="9" :h="6" />
        <span class="tool t-text"><Icon name="text" :w="23" :h="24" /></span>
        <span class="tool t-next"><Icon name="comment" :w="24" :h="24" /></span>
        <span class="tool t-next"><Icon name="widgets" :w="26" :h="26" /></span>
        <div class="dev"><span class="dev-track"><i class="dev-knob"><Icon name="code" :w="24" :h="14" /></i></span></div>
      </nav>
    </main>

    <footer class="taskbar">
      <div class="weather"><Icon name="weather" :w="35" :h="31" /><b>25°</b></div>
      <div class="apps">
        <span v-for="a in apps" :key="a.name" class="app" :class="[a.name, { open: a.open }]">
          <Icon :name="a.name" :w="a.w" :h="a.h" />
          <Icon v-if="a.pink" class="app-badge" name="badgePink" :w="22" :h="22" />
          <i v-if="a.count" class="app-count">{{ a.count }}</i>
        </span>
      </div>
      <div class="running">
        <span class="run-btn"><Icon name="chrome" :w="36" :h="36" /><Icon class="run-badge" name="avatar" :w="30" :h="30" /></span>
        <Icon name="dots" :w="23" :h="5" />
      </div>
      <div class="tray">
        <Icon name="upArrow" :w="16" :h="9" />
        <Icon class="tp" name="touchpad" :w="23" :h="18" />
        <span class="lang">ENG<br />US</span>
        <Icon class="wf" name="wifi" :w="22" :h="19" />
        <Icon class="sp" name="speaker" :w="23" :h="18" />
        <Icon class="bt" name="battery" :w="24" :h="19" />
        <span class="clock">02:29<br />05/09/2024</span>
        <Icon class="bl" name="bell" :w="22" :h="22" />
        <span class="pre"><Icon name="copilot" :w="36" :h="34" /><b>PRE</b></span>
      </div>
    </footer>
  </div>
</template>

<style>
body {
  margin: 0;
  overflow: hidden;
}
</style>

<style scoped>
* {
  box-sizing: border-box;
}
p,
h1,
h2,
h3 {
  margin: 0;
}
i,
em {
  font-style: normal;
}
svg {
  display: block;
  flex: none;
}
.screen {
  width: 1920px;
  height: 1080px;
  display: flex;
  flex-direction: column;
  overflow: hidden;
  font-family: Inter, "Liberation Sans", sans-serif;
}

/* browser */
.browser {
  height: 131px;
  background: #202221;
  font-family: "Open Sans", "Noto Sans", sans-serif;
}
.tabstrip {
  height: 60px;
  display: flex;
  align-items: center;
}
.tab-search {
  width: 42px;
  height: 42px;
  margin: 0 4.5px 0 9px;
  padding: 0;
  border: 0;
  border-radius: 14px;
  background: #3c3c3c;
  display: grid;
  place-items: center;
}
.tabs {
  display: flex;
}
.tab {
  width: 25.48px;
  height: 24px;
  display: flex;
  justify-content: center;
  box-shadow: 1px 0 0 #3c3c3c;
  overflow: hidden;
}
.tabs.wide .tab {
  width: 27px;
}
.tab-active {
  position: relative;
  width: 48px;
  height: 51px;
  margin: 9px 5.2px 0 3.5px;
  border-radius: 14px 14px 0 0;
  background: #3c3c3c;
  display: grid;
  place-items: center;
  padding-bottom: 9px;
}
.tab-active::before,
.tab-active::after {
  content: "";
  position: absolute;
  bottom: 0;
  width: 14px;
  height: 14px;
}
.tab-active::before {
  left: -14px;
  background: radial-gradient(circle at 0 0, transparent 13.5px, #3c3c3c 14px);
}
.tab-active::after {
  right: -14px;
  background: radial-gradient(circle at 100% 0, transparent 13.5px, #3c3c3c 14px);
}
.new-tab {
  margin-left: 17.8px;
}
.win-controls {
  margin-left: auto;
  display: flex;
}
.win-controls span {
  width: 68.5px;
  display: grid;
  place-items: center;
}
.toolbar {
  height: 71px;
  background: #3c3c3c;
  border-bottom: 2px solid #4a4a4a;
  border-radius: 10px 10px 0 0;
  display: flex;
  align-items: center;
}
.nav {
  width: 54px;
  display: grid;
  place-items: center;
}
.nav:first-child {
  margin-left: 6px;
}
.omnibox {
  width: 1371px;
  height: 51px;
  margin-left: 12px;
  border-radius: 26px;
  background: #282828;
  display: flex;
  align-items: center;
}
.site-info {
  width: 36px;
  height: 36px;
  margin-left: 8px;
  border-radius: 50%;
  background: #3c3c3c;
  display: grid;
  place-items: center;
}
.url {
  margin-left: 12px;
  width: 1260px;
  font-size: 21px;
  line-height: 30px;
  letter-spacing: -0.24px;
  color: #c7c7c7;
  white-space: nowrap;
}
.url b {
  font-weight: 400;
  color: #e8e8e8;
}
.star {
  margin-left: 7px;
}
.exts {
  flex: 1;
  display: flex;
  align-items: center;
}
.ext {
  position: relative;
  width: 54px;
  display: grid;
  place-items: center;
}
.ext:first-child {
  margin-left: 12px;
}
.ext-count {
  position: absolute;
  left: 24px;
  top: 13px;
  width: 24px;
  height: 21px;
  border-radius: 5px;
  background: #6633c0;
  color: #fff;
  font: 700 14px/20px "Open Sans", sans-serif;
  text-align: center;
}
.ext-rule {
  width: 2px;
  height: 24px;
  margin-left: 12px;
  background: #5c5c5c;
}
.profile {
  margin: 0 36px 0 25px;
}

/* canvas */
.canvas {
  position: relative;
  height: 877px;
  background: #f1f1f1;
  overflow: hidden;
}
.canvas svg {
  stroke: currentColor;
}
.frame-label {
  display: block;
  height: 46px;
  padding-left: 339px;
  font-size: 16.5px;
  line-height: 50px;
  letter-spacing: 0.08px;
  color: #b0b0b0;
}
.frame {
  width: 1106px;
  height: 831px;
  margin-left: 339px;
  padding: 63.3px 0 0 127.5px;
  background: #fff;
  color: #000;
  overflow: hidden;
}
h1,
h2 {
  font: 700 18.5px/24px Roboto, sans-serif;
}
h1 {
  color: #7945ff;
  letter-spacing: -0.3px;
}
h2 {
  margin-top: 57px;
  letter-spacing: -0.4px;
}
.swatches {
  margin-top: 14.7px;
  display: grid;
  grid-template-columns: 291.5px 293px 270px;
  row-gap: 22px;
  font-size: 12px;
}
.chip {
  width: 268px;
  height: 74px;
  margin-bottom: 10.3px;
  padding: 41px 0 0 15.5px;
  border-radius: 15px;
  line-height: 20px;
  font-weight: 700;
  color: #fff;
  letter-spacing: -0.1px;
}
.swatch p {
  height: 19px;
  line-height: 19px;
  display: flex;
}
.swatch p b {
  font-weight: 650;
  letter-spacing: -0.52px;
  word-spacing: 0.9px;
}
.swatch p span {
  width: 50.5px;
  color: #555;
}
.black .chip {
  background: #000;
}
.deep .chip {
  background: #5c2dd5;
}
.violet .chip {
  width: 267.5px;
  background: #7945ff;
}
.pink {
  margin-top: 8px;
}
.pink .chip {
  margin-left: -1px;
  background: #fd6687;
}
.yellow .chip {
  width: 267px;
  background: #ffce67;
  color: #000;
}
.white .chip {
  width: 273px;
  height: 78px;
  margin: -2px 0 8.3px -3.5px;
  padding: 40.5px 0 0 15px;
  border: 2.5px solid #000;
  border-radius: 18px;
  color: #000;
}
.white p {
  margin-left: -2px;
}
.typo {
  margin-top: 70.9px;
  letter-spacing: -0.5px;
}
.columns {
  display: flex;
}
.col {
  width: 437.5px;
  flex: none;
}
.caption {
  height: 16px;
  display: flex;
  font-size: 12px;
  line-height: 16px;
  letter-spacing: 0.2px;
  color: #555;
}
.caption span {
  width: 130.5px;
}
.caption b {
  width: 44.5px;
  letter-spacing: 0;
  color: #000;
}
.caption.medium {
  letter-spacing: 0.2px;
}
.caption.medium span {
  width: 152px;
}
.caption.l {
  margin-top: 23px;
}
.caption.m {
  margin-top: 21.5px;
}
.caption.s {
  margin-top: 22.5px;
}
.caption.xs {
  margin-top: 22.5px;
}
.sample {
  font-weight: 700;
  white-space: nowrap;
}
.sample.l {
  margin-top: 3px;
  font-size: 42px;
  line-height: 56px;
  letter-spacing: 0.1px;
}
.sample.m {
  margin-top: 3.5px;
  font-size: 18px;
  line-height: 24px;
}
.sample.s {
  margin-top: 4px;
  font-size: 15px;
  line-height: 20px;
}
.sample.xs {
  margin-top: 3.5px;
  font-size: 12px;
  line-height: 16px;
}
.body {
  margin-top: 12.8px;
  font-size: 12px;
  font-weight: 500;
  line-height: 15.35px;
  letter-spacing: 0.2px;
  color: #555;
}
.body p {
  height: 15.35px;
  white-space: nowrap;
}
.selection-corner {
  position: absolute;
  left: 1522px;
  top: 3px;
  width: 16px;
  height: 15px;
  border: solid #45a3ea;
  border-width: 2px 2px 0 0;
}
.side-label {
  position: absolute;
  left: 1870px;
  font-size: 16.5px;
  line-height: 24px;
  color: #d6d6d6;
}
.side-label.first {
  top: 13px;
}
.side-label.second {
  top: 831px;
}
.side-frame {
  position: absolute;
  right: 0;
}
.side-frame.first {
  top: 46px;
  width: 30px;
  height: 691px;
  background: #baaae8;
}
.side-frame.second {
  top: 864px;
  width: 50px;
  height: 13px;
  background: #a79bc5;
}
.vscroll {
  position: absolute;
  left: 1906px;
  top: 215px;
  width: 10px;
  height: 74px;
  border: 1.5px solid #cdc1ee;
  border-radius: 5px;
  background: #aea0d2;
}
.hscroll {
  position: absolute;
  left: 6px;
  top: 865px;
  width: 251px;
  height: 7px;
  border-radius: 4px;
  background: linear-gradient(90deg, #d2d2d2, #b4b4b4);
}

/* panels */
.panel {
  position: absolute;
  top: 18px;
  height: 842px;
  border-radius: 20px;
  background: #2c2c2c;
  color: #fff;
  overflow: hidden;
  font-size: 16.5px;
  letter-spacing: 0.18px;
  font-feature-settings: "cv08";
  box-shadow: 0 0 1px #0008, 0 2px 7px #0004;
}
.panel.left {
  left: 18px;
  width: 360px;
}
.panel.right {
  left: 1541px;
  width: 361px;
}
.panel b,
.pill,
h3 {
  font-weight: 600;
  letter-spacing: 0;
}
.muted {
  color: #b0b0b0;
  font-weight: 500;
  letter-spacing: 0;
}
.pill {
  height: 36px;
  padding: 0 12px;
  border-radius: 7px;
  background: #383838;
  line-height: 36px;
}
.file {
  height: 142px;
  border-bottom: 1px solid #444;
}
.file-top {
  height: 72px;
  padding: 0 24px 0 28px;
  display: flex;
  align-items: center;
}
.c1 {
  margin-left: 10.5px;
}
.toggle {
  margin-left: auto;
}
.file-name {
  height: 20px;
  padding-left: 24px;
  display: flex;
  align-items: center;
  gap: 13px;
  font-size: 19.5px;
}
.file-name .file-name b,
.file-name b {
  letter-spacing: -0.1px;
}
.file-meta {
  margin-top: 7px;
  height: 24px;
  padding-left: 24px;
  display: flex;
  gap: 12.5px;
  line-height: 24px;
  letter-spacing: 0.35px;
  color: #b0b0b0;
}
.file-meta em {
  padding: 0 6px;
  border-radius: 7px;
  background: #394360;
  color: #7cc4f8;
}
.tabs-row {
  height: 61px;
  padding: 0 21px 0 12px;
  border-bottom: 1px solid #444;
  display: flex;
  align-items: center;
}
.tabs-row .muted {
  margin-left: 25px;
}
.end {
  margin-left: auto;
}
.pages {
  height: 120px;
  border-bottom: 1px solid #444;
}
.head {
  height: 60px;
  padding: 0 22.5px 0 7.5px;
  display: flex;
  align-items: center;
}
.head b {
  margin-left: 7.5px;
}
.page {
  height: 36px;
  margin: 6px 12px 0;
  padding-left: 12px;
  border-radius: 7px;
  background: #383838;
  line-height: 36px;
  font-weight: 600;
  letter-spacing: 0;
}
.row {
  height: 48px;
  padding: 6px 12px 6px 18px;
}
.row-box {
  height: 36px;
  padding-left: 46px;
  display: flex;
  align-items: center;
  gap: 16px;
  border-radius: 7px;
  color: #8c8c8c;
}
.row-box span {
  color: #fff;
}
.row.top .row-box {
  padding-left: 10px;
  font-weight: 600;
  letter-spacing: 0.05px;
}
.row.active {
  box-shadow: inset 0 1px 0 #444;
}
.row.active .row-box {
  background: #4a5878;
  color: #fff;
}

.r-top {
  height: 72px;
  padding: 0 12px;
  display: flex;
  align-items: center;
}
.user {
  width: 36px;
  height: 36px;
  margin-left: 6px;
  border-radius: 50%;
  background: #14ae5c;
  line-height: 36px;
  text-align: center;
}
.c-user {
  margin-left: 8px;
}
.r-play {
  margin-left: auto;
}
.c-play {
  margin: 0 14px 0 22px;
}
.share {
  width: 82px;
  height: 48px;
  border-radius: 7px;
  background: #0c8ce9;
  line-height: 48px;
  text-align: center;
  font-weight: 500;
  letter-spacing: 0;
}
.r-tabs {
  height: 49px;
  padding: 0 24.5px 12px 12px;
  border-bottom: 1px solid #444;
  display: flex;
  align-items: center;
}
.r-tabs .muted {
  margin-left: 24px;
}
.zoom {
  margin: 0 20.5px 0 auto;
  letter-spacing: 0.9px;
}
.r-title {
  height: 73px;
  padding: 0 19px 0 24px;
  border-bottom: 1px solid #444;
  display: flex;
  align-items: center;
  font-size: 19.5px;
}
.r-title b {
  flex: 1;
}
.r-title svg + svg {
  margin-left: 23px;
}
.r-title svg + svg:last-child {
  margin-left: 20px;
}
.prop {
  padding: 0 0 24px 24px;
  border-bottom: 1px solid #444;
}
h3 {
  height: 60px;
  margin-bottom: 6px;
  padding-right: 21px;
  display: flex;
  align-items: center;
  justify-content: space-between;
  font-size: 16.5px;
}
.eye {
  margin-left: auto;
}
.drop {
  margin: 0 2.5px 0 25.5px;
}
.prow {
  height: 36px;
  margin-top: 12px;
  display: grid;
  grid-template-columns: 132px 133px 35px;
  column-gap: 12px;
  align-items: center;
}
.prow > svg {
  justify-self: center;
}
h3 + .prow {
  margin-top: 0;
}
.seg {
  height: 36px;
  display: flex;
  gap: 1px;
  border-radius: 7px;
  overflow: hidden;
}
.seg span {
  flex: 1;
  background: #383838;
  display: grid;
  place-items: center;
}
.seg svg {
  stroke-width: 1.2;
}
.field {
  height: 36px;
  padding-left: 11px;
  border-radius: 7px;
  background: #383838;
  display: flex;
  align-items: center;
}
.field i {
  width: 24.5px;
  color: #a8a8a8;
}
.field.tight {
  padding-left: 9px;
}
.field.tight i {
  width: 26px;
}
.field.wide {
  padding-left: 9px;
}
.field.wide i {
  width: 27px;
}
.fill {
  grid-column: 1 / 3;
  height: 36px;
  padding-left: 6px;
  border: 1px solid #444;
  border-radius: 7px;
  display: flex;
  align-items: center;
  gap: 6px;
}
.fill i {
  width: 24px;
  height: 24px;
  border-radius: 50%;
  background: #fff;
}
.help {
  position: absolute;
  left: 295px;
  top: 776px;
  width: 48px;
  height: 48px;
  border-radius: 50%;
  background: #1e1e1e;
  display: grid;
  place-items: center;
}

/* bottom toolbar */
.tools {
  position: absolute;
  left: 644px;
  top: 788px;
  width: 632px;
  height: 72px;
  padding-left: 12px;
  border-radius: 20px;
  background: #2c2c2c;
  color: #fff;
  display: flex;
  align-items: center;
  box-shadow: 0 0 1px #000a, 0 3px 9px #0007;
}
.tool {
  width: 48px;
  height: 48px;
  border-radius: 7px;
  display: grid;
  place-items: center;
}
.tool.on {
  background: #0c8ce9;
}
.tc {
  margin: 0 20.4px 0 8.2px;
}
.t-text {
  margin-left: -1.5px;
}
.t-next {
  margin-left: 12.5px;
}
.dev {
  width: 98px;
  height: 72px;
  margin-left: auto;
  padding-left: 19px;
  border-left: 2px solid #444;
  display: flex;
  align-items: center;
}
.dev-track {
  width: 59px;
  height: 36px;
  padding: 1px 0;
  border-radius: 7px;
  background: #383838;
}
.dev-knob {
  width: 34px;
  height: 34px;
  border: 1px solid #444;
  border-radius: 7px;
  background: #2c2c2c;
  display: grid;
  place-items: center;
  box-shadow: 0 1px 3px #0006;
}

/* taskbar */
.taskbar {
  height: 72px;
  background: linear-gradient(#000, #04031a);
  color: #fff;
  display: flex;
  align-items: center;
  font-family: "Open Sans", "Noto Sans", sans-serif;
}
.weather {
  position: relative;
  width: 181.6px;
  padding: 4px 0 0 31px;
}
.weather b {
  position: absolute;
  left: 42px;
  top: -10px;
  width: 38px;
  height: 26px;
  border-radius: 13px;
  background: #2e2e2e;
  font: 400 16px/26px "Open Sans", sans-serif;
  text-align: center;
}
.apps {
  display: flex;
}
.app {
  position: relative;
  width: 66.1px;
  height: 72px;
  display: grid;
  place-items: center;
}
.app.open::after {
  content: "";
  position: absolute;
  left: 29px;
  bottom: 7px;
  width: 9px;
  height: 5px;
  border-radius: 3px;
  background: #9a9a9a;
}
.app.whatsapp > svg {
  transform: scale(1.5);
}
.app-badge {
  position: absolute;
  left: 36px;
  top: 12px;
}
.app-count {
  position: absolute;
  left: 31px;
  top: 10px;
  width: 30px;
  height: 25px;
  border-radius: 13px;
  background: #a3a3a6;
  color: #111;
  font-size: 16px;
  line-height: 25px;
  text-align: center;
}
.running {
  width: 139px;
  height: 72px;
  margin-left: 4.4px;
  padding-left: 6.5px;
  border: solid #2a2a35;
  border-width: 0 1px;
  display: flex;
  align-items: center;
  gap: 25.5px;
}
.run-btn {
  position: relative;
  width: 58px;
  height: 60px;
  border: 1px solid #2c2c38;
  border-radius: 6px;
  background: #14141f;
  display: grid;
  place-items: center;
}
.run-btn::after {
  content: "";
  position: absolute;
  left: 20px;
  bottom: 0;
  width: 17px;
  height: 5px;
  border-radius: 3px;
  background: #b0b0b0;
}
.run-badge {
  position: absolute;
  left: 28px;
  top: 11px;
  width: 20px;
  height: 20px;
}
.tray {
  flex: 1;
  display: flex;
  align-items: center;
  padding-left: 107px;
  font-size: 17px;
  line-height: 24px;
}
.tp {
  margin-left: 28px;
}
.lang {
  width: 50px;
  margin-left: 20.5px;
  text-align: center;
}
.wf {
  margin-left: 21.5px;
}
.sp {
  margin-left: 11.5px;
}
.bt {
  margin-left: 14px;
}
.clock {
  width: 110px;
  margin-left: 8px;
  text-align: right;
  letter-spacing: 0.1px;
}
.bl {
  margin-left: 12px;
}
.pre {
  position: relative;
  margin-left: 24px;
}
.pre b {
  position: absolute;
  left: 8px;
  top: 22px;
  padding: 0 4px;
  border-radius: 3px;
  background: #ffc400;
  color: #222;
  font: 700 12px/15px "Open Sans", sans-serif;
}
</style>
